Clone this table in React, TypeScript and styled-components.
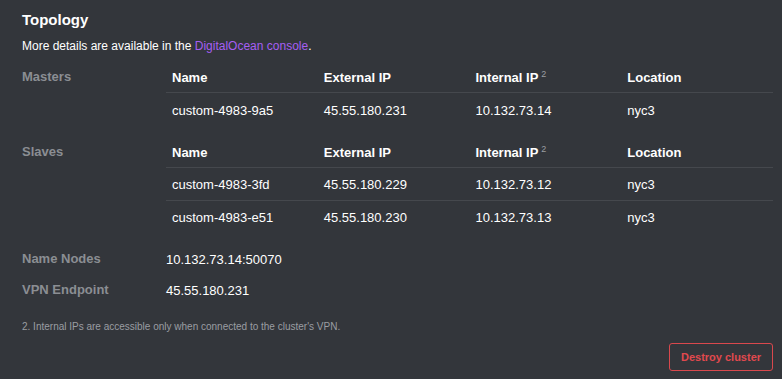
import React from "react";
import styled, { createGlobalStyle } from "styled-components";

const Global = createGlobalStyle`
  html, body { margin: 0; padding: 0; background: #33363b; }
  body { font-family: "Liberation Sans", Arial, Helvetica, sans-serif; color: #ffffff; }
`;

const Page = styled.div`
  width: 782px;
  height: 379px;
  box-sizing: border-box;
  padding: 11px 9px 0 22px;
  background: #33363b;
  display: flex;
  flex-direction: column;
`;

const Title = styled.h2`
  margin: 0;
  font-size: 15px;
  font-weight: 700;
  line-height: 18px;
  color: #ffffff;
`;

const Intro = styled.p`
  margin: 9px 0 0;
  font-size: 12px;
  line-height: 16px;
  color: #ffffff;
`;

const Link = styled.a`
  color: #a65ff2;
  text-decoration: none;
`;

const Section = styled.div<{ $top: number }>`
  display: grid;
  grid-template-columns: 144px 1fr;
  margin-top: ${(p) => p.$top}px;
`;

const Label = styled.div`
  font-size: 13px;
  font-weight: 700;
  color: #8b8e93;
  line-height: 30px;
`;

const Table = styled.table`
  border-collapse: collapse;
  width: 100%;
  table-layout: fixed;
`;

const Th = styled.th`
  text-align: left;
  font-size: 13px;
  font-weight: 700;
  color: #ffffff;
  height: 30px;
  padding: 0 0 0 6px;
  border-bottom: 1px solid #45484d;
`;

const Sup = styled.sup`
  font-size: 9px;
  font-weight: 400;
  color: #9a9da2;
  margin-left: 3px;
  vertical-align: 5px;
`;

const Td = styled.td<{ $pad: number }>`
  font-size: 13px;
  color: #ffffff;
  height: 31px;
  padding: ${(p) => p.$pad}px 0 0 6px;
`;

const Tr = styled.tr`
  & + & td { border-top: 1px solid #45484d; }
`;

const Info = styled.div`
  display: flex;
  flex-direction: column;
  margin-top: 11px;
`;

const InfoRow = styled.div`
  display: grid;
  grid-template-columns: 144px 1fr;
  line-height: 31px;
  font-size: 13px;
`;

const Value = styled.div`
  color: #ffffff;
  font-size: 13px;
`;

const Footnote = styled.p`
  margin: 14px 0 0;
  font-size: 10px;
  line-height: 14px;
  color: #9a9da2;
`;

const Actions = styled.div`
  display: flex;
  justify-content: flex-end;
  margin-top: 9px;
`;

const DangerButton = styled.button`
  height: 28px;
  width: 104px;
  box-sizing: border-box;
  border: 1px solid #d9484d;
  border-radius: 3px;
  background: transparent;
  color: #e0494e;
  font-family: inherit;
  font-size: 11px;
  font-weight: 700;
  padding: 0;
  cursor: pointer;
`;

type Node = { name: string; ext: string; int: string; loc: string };

const masters: Node[] = [
  { name: "custom-4983-9a5", ext: "45.55.180.231", int: "10.132.73.14", loc: "nyc3" },
];
const slaves: Node[] = [
  { name: "custom-4983-3fd", ext: "45.55.180.229", int: "10.132.73.12", loc: "nyc3" },
  { name: "custom-4983-e51", ext: "45.55.180.230", int: "10.132.73.13", loc: "nyc3" },
];

function NodeTable({ rows, pad }: { rows: Node[]; pad: number }) {
  return (
    <Table>
      <thead>
        <tr>
          <Th>Name</Th>
          <Th>External IP</Th>
          <Th>
            Internal IP<Sup>2</Sup>
          </Th>
          <Th>Location</Th>
        </tr>
      </thead>
      <tbody>
        {rows.map((r) => (
          <Tr key={r.name}>
            <Td $pad={pad}>{r.name}</Td>
            <Td $pad={pad}>{r.ext}</Td>
            <Td $pad={pad}>{r.int}</Td>
            <Td $pad={pad}>{r.loc}</Td>
          </Tr>
        ))}
      </tbody>
    </Table>
  );
}

export default function App() {
  return (
    <>
      <Global />
      <Page>
        <Title>Topology</Title>
        <Intro>
          More details are available in the <Link href="#">DigitalOcean console</Link>.
        </Intro>
        <Section $top={8}>
          <Label>Masters</Label>
          <NodeTable rows={masters} pad={2} />
        </Section>
        <Section $top={11}>
          <Label>Slaves</Label>
          <NodeTable rows={slaves} pad={1} />
        </Section>
        <Info>
          <InfoRow>
            <Label>Name Nodes</Label>
            <Value>10.132.73.14:50070</Value>
          </InfoRow>
          <InfoRow>
            <Label>VPN Endpoint</Label>
            <Value>45.55.180.231</Value>
          </InfoRow>
        </Info>
        <Footnote>2. Internal IPs are accessible only when connected to the cluster's VPN.</Footnote>
        <Actions>
          <DangerButton>Destroy cluster</DangerButton>
        </Actions>
      </Page>
    </>
  );
}
